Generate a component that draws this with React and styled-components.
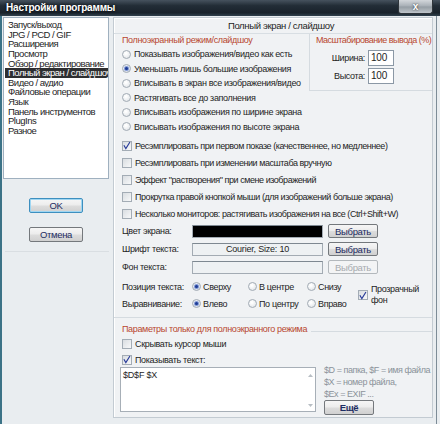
import React from 'react';
import styled, { createGlobalStyle, css } from 'styled-components';

const Global = createGlobalStyle`
  html, body { margin: 0; padding: 0; background: #e9edf0; }
  body { font-family: "Liberation Sans", Arial, sans-serif; font-size: 9px; color: #1e1e1e; letter-spacing: -0.35px; }
  * { box-sizing: border-box; }
`;

const Window = styled.div`
  width: 440px; height: 424px; display: flex; flex-direction: column; overflow: hidden;
  background: #e9edf0;
`;

const TitleBar = styled.div`
  height: 16px; flex: none; display: flex; align-items: flex-start;
  background: linear-gradient(#46525e 0%, #232d37 35%, #19222b 80%, #31414d 100%);
`;

const Title = styled.div`
  color: #fff; font-weight: bold; font-size: 10px; letter-spacing: -0.2px;
  padding: 2px 0 0 6px; line-height: 12px; text-shadow: 0 0 3px #000;
`;

const CloseBtn = styled.div`
  margin-left: auto; margin-right: 7px; width: 35px; height: 14px;
  border: 1px solid #2f353b; border-top: none; border-radius: 0 0 3px 3px;
  background: linear-gradient(#d3d7db, #a7aeb5 48%, #949ca3 52%, #bfc5ca);
  color: #fff; font-weight: bold; font-size: 10px; line-height: 12px; letter-spacing: 0;
  display: flex; align-items: center; justify-content: center; text-shadow: 0 0 2px #222;
`;

const Body = styled.div`
  flex: 1; min-height: 0; width: 437px; display: flex; gap: 4px;
  border-left: 2px solid #3c7387; border-right: 1px solid #7d8c97;
  padding: 1px 3px 6px 1px;
`;

const LeftColumn = styled.div`
  width: 106px; flex: none; display: flex; flex-direction: column; align-items: center;
`;

const ListBox = styled.div`
  width: 106px; height: 162px; background: #fff; border: 1px solid #9fb0bf;
  padding-top: 2px; overflow: hidden;
`;

const ListItem = styled.div`
  height: 9.65px; line-height: 10px; padding-left: 4px; white-space: nowrap; overflow: hidden;
  font-size: 9.5px; letter-spacing: -0.5px;
  ${p => p.$selected && css`background: #2e2f31; color: #fff; margin-left: 1px; padding-left: 3px;`}
`;

const Button = styled.div`
  width: ${p => p.$w || 50}px; height: ${p => p.$h || 14}px;
  display: flex; align-items: center; justify-content: center;
  border: 1px solid #74787c; border-radius: 2px;
  background: linear-gradient(#f6f6f6 0%, #ececec 48%, #dddddd 52%, #d0d0d0 100%);
  color: #1d2c62; font-size: 9.5px; flex: none;
  ${p => p.$default && css`border-color: #3d8fbf; box-shadow: inset 0 0 0 1px #9fd6f2;`}
  ${p => p.$disabled && css`border-color: #b3b8bc; background: #f3f4f5; color: #a7abaf;`}
  ${p => p.$bold && css`font-weight: bold;`}
`;

const OkButton = styled(Button)`
  margin-top: 19px;
`;
const CancelButton = styled(Button)`
  margin-top: 14px;
`;
const LeftSeparator = styled.div`
  align-self: stretch; margin: 9px 0 0 2px; border-top: 1px solid #d9dee2;
`;

const Panel = styled.div`
  width: 320px; flex: none; display: flex; flex-direction: column;
  background: #f0f2f4; border: 1px solid #c3cbd2;
  box-shadow: inset 1px 1px 0 #fff;
`;

const PanelHeader = styled.div`
  height: 16px; line-height: 15px; text-align: center; border-bottom: 1px solid #d8dee3;
  padding-left: 16px; font-size: 9.5px;
`;

const TopGroups = styled.div`
  height: 103px; display: flex; flex: none;
`;

const LeftGroup = styled.div`
  flex: 1; padding-left: 8px;
`;

const GroupTitle = styled.div`
  height: 13px; line-height: 13px; color: #b8472f; white-space: nowrap;
  letter-spacing: ${p => p.$tight ? '-0.5px' : 'inherit'};
`;

const RightGroup = styled.div`
  width: 123px; height: 57px; border-left: 1px solid #d5dbe0; border-bottom: 1px solid #d5dbe0;
  padding-left: 6px;
`;

const ScaleGrid = styled.div`
  margin: 3px 0 0 -6px; display: grid; grid-template-columns: 55px 26px;
  column-gap: 3px; row-gap: 2px; align-items: center;
`;

const FieldLabel = styled.div`
  text-align: right;
`;

const NumInput = styled.div`
  height: 16px; background: #fff; border: 1px solid #8b98a5; line-height: 14px; padding-left: 2px;
  letter-spacing: -0.2px; font-size: 10px;
`;

const OptRow = styled.div`
  height: ${p => p.$h || 14.5}px; display: flex; align-items: center; gap: 3px; white-space: nowrap;
`;

const CheckRow = styled(OptRow)`
  gap: 3px;
`;

const RadioCircle = styled.span`
  width: 9px; height: 9px; border-radius: 50%; flex: none; position: relative;
  border: 1px solid #a2abb4;
  background: radial-gradient(circle at 40% 35%, #ffffff 10%, #dfe3e7 90%);
  ${p => p.$checked && css`
    &::after {
      content: ''; position: absolute; left: 2px; top: 2px; width: 3px; height: 3px; border-radius: 50%;
      background: #1d3b93; box-shadow: 0 0 1px 1px #6f8ad0;
    }
  `}
`;

const CheckBox = styled.span`
  width: 10px; height: 10px; flex: none; display: inline-flex; align-items: center; justify-content: center;
  border: 1px solid #a3acb5;
  background: linear-gradient(135deg, #d9dde1, #f7f8f9);
`;

const Radio = ({ checked, children }) => (
  <>
    <RadioCircle $checked={checked} />
    <span>{children}</span>
  </>
);

const Check = ({ checked }) => (
  <CheckBox>
    {checked && (
      <svg width="9" height="9" viewBox="0 0 9 9">
        <path d="M1 4.2 L3.2 8 L7.8 0.5" fill="none" stroke="#2a3d9a" strokeWidth="1.3" />
      </svg>
    )}
  </CheckBox>
);

const Section = styled.div`
  padding-left: 8px;
`;

const ChecksBlock = styled(Section)`
  letter-spacing: -0.45px;
`;

const ColorRow = styled.div`
  height: 18px; display: flex; align-items: center; padding-left: 8px;
`;

const ColorLabel = styled.div`
  width: 70px; flex: none; white-space: nowrap;
`;

const ColorBox = styled.div`
  width: 131px; height: 13px; margin-right: 5px; flex: none;
  border: 1px solid #a3abb3; border-top-color: #7e8891;
  background: ${p => p.$black ? '#000' : '#eef1f3'};
  text-align: center; line-height: 11px; letter-spacing: -0.2px;
`;

const PosGrid = styled.div`
  margin-top: 2px; padding-left: 8px; display: grid;
  grid-template-columns: 70px 56px 59px 51px auto;
  grid-template-rows: 17px 17px; align-items: center; white-space: nowrap;
`;

const PosCell = styled.div`
  display: flex; align-items: center; gap: 2px; white-space: nowrap;
`;

const TransparentCell = styled.div`
  grid-column: 5; grid-row: 1 / span 2; display: flex; align-items: center; gap: 3px;
  line-height: 11px;
`;

const Divider = styled.div`
  margin-top: 5px; border-top: 1px solid #d5dbe0;
`;

const LowerTitleRow = styled.div`
  height: 15px; margin-top: 3px; display: flex; align-items: center; padding-left: 8px;
  color: #b8472f; white-space: nowrap;
  &::after { content: ''; flex: 1; margin-left: 4px; margin-top: 6px; border-top: 1px solid #d5dbe0; }
`;

const TextRow = styled.div`
  display: flex; padding-left: 6px; gap: 8px;
`;

const TextArea = styled.div`
  width: 196px; height: 45px; background: #fff; border: 1px solid #a7afb7; display: flex; flex: none;
`;

const TextContent = styled.div`
  flex: 1; padding: 2px 0 0 2px; letter-spacing: -0.2px;
`;

const ScrollTrack = styled.div`
  width: 10px; display: flex; flex-direction: column; justify-content: space-between; align-items: center;
  padding: 6px 0 4px;
`;

const HelpColumn = styled.div`
  display: flex; flex-direction: column; margin-top: -3px;
`;

const HelpText = styled.div`
  color: #8b929a; line-height: 12px; white-space: nowrap; letter-spacing: -0.45px;
`;

const MoreButton = styled(Button)`
  margin-top: 0;
`;

const menu = [
  'Запуск/выход', 'JPG / PCD / GIF', 'Расширения', 'Просмотр', 'Обзор / редактирование',
  'Полный экран / слайдшоу', 'Видео / аудио', 'Файловые операции', 'Язык',
  'Панель инструментов', 'PlugIns', 'Разное',
];

const radios = [
  ['Показывать изображения/видео как есть', false],
  ['Уменьшать лишь большие изображения', true],
  ['Вписывать в экран все изображения/видео', false],
  ['Растягивать все до заполнения', false],
  ['Вписывать изображения по ширине экрана', false],
  ['Вписывать изображения по высоте экрана', false],
];

const checks = [
  ['Ресэмплировать при первом показе (качественнее, но медленнее)', true],
  ['Ресэмплировать при изменении масштаба вручную', false],
  ['Эффект "растворения" при смене изображений', false],
  ['Прокрутка правой кнопкой мыши (для изображений больше экрана)', false],
  ['Несколько мониторов: растягивать изображения на все (Ctrl+Shift+W)', false],
];

const Arrow = ({ up }) => (
  <svg width="5" height="3" viewBox="0 0 5 3">
    <path d={up ? 'M0 3 L2.5 0 L5 3 Z' : 'M0 0 L2.5 3 L5 0 Z'} fill="#b8bec4" />
  </svg>
);

export default function App() {
  return (
    <Window>
      <Global />
      <TitleBar>
        <Title>Настройки программы</Title>
        <CloseBtn>x</CloseBtn>
      </TitleBar>
      <Body>
        <LeftColumn>
          <ListBox>
            {menu.map((m, i) => (
              <ListItem key={m} $selected={i === 5}>{m}</ListItem>
            ))}
          </ListBox>
          <OkButton $w={54} $h={15} $default>OK</OkButton>
          <CancelButton $w={54} $h={15}>Отмена</CancelButton>
          <LeftSeparator />
        </LeftColumn>
        <Panel>
          <PanelHeader>Полный экран / слайдшоу</PanelHeader>
          <TopGroups>
            <LeftGroup>
              <GroupTitle>Полноэкранный режим/слайдшоу</GroupTitle>
              {radios.map(([t, c]) => (
                <OptRow key={t}><Radio checked={c}>{t}</Radio></OptRow>
              ))}
            </LeftGroup>
            <RightGroup>
              <GroupTitle $tight>Масштабирование вывода (%)</GroupTitle>
              <ScaleGrid>
                <FieldLabel>Ширина:</FieldLabel>
                <NumInput>100</NumInput>
                <FieldLabel>Высота:</FieldLabel>
                <NumInput>100</NumInput>
              </ScaleGrid>
            </RightGroup>
          </TopGroups>
          <ChecksBlock>
            {checks.map(([t, c]) => (
              <CheckRow key={t} $h={17}><Check checked={c} /><span>{t}</span></CheckRow>
            ))}
          </ChecksBlock>
          <ColorRow>
            <ColorLabel>Цвет экрана:</ColorLabel>
            <ColorBox $black />
            <Button $w={50} $h={14}>Выбрать</Button>
          </ColorRow>
          <ColorRow>
            <ColorLabel>Шрифт текста:</ColorLabel>
            <ColorBox>Courier, Size: 10</ColorBox>
            <Button $w={50} $h={14}>Выбрать</Button>
          </ColorRow>
          <ColorRow>
            <ColorLabel>Фон текста:</ColorLabel>
            <ColorBox />
            <Button $w={50} $h={14} $disabled>Выбрать</Button>
          </ColorRow>
          <PosGrid>
            <div>Позиция текста:</div>
            <PosCell><Radio checked>Сверху</Radio></PosCell>
            <PosCell><Radio>В центре</Radio></PosCell>
            <PosCell><Radio>Снизу</Radio></PosCell>
            <TransparentCell>
              <Check checked />
              <span>Прозрачный<br />фон</span>
            </TransparentCell>
            <div>Выравнивание:</div>
            <PosCell><Radio checked>Влево</Radio></PosCell>
            <PosCell><Radio>По центру</Radio></PosCell>
            <PosCell><Radio>Вправо</Radio></PosCell>
          </PosGrid>
          <Divider />
          <LowerTitleRow>Параметры только для полноэкранного режима</LowerTitleRow>
          <Section>
            <CheckRow $h={16}><Check /><span>Скрывать курсор мыши</span></CheckRow>
            <CheckRow $h={15}><Check checked /><span>Показывать текст:</span></CheckRow>
          </Section>
          <TextRow>
            <TextArea>
              <TextContent>$D$F $X</TextContent>
              <ScrollTrack><Arrow up /><Arrow /></ScrollTrack>
            </TextArea>
            <HelpColumn>
              <HelpText>$D = папка, $F = имя файла</HelpText>
              <HelpText>$X = номер файла,</HelpText>
              <HelpText>$Ex = EXIF ...</HelpText>
              <MoreButton $w={50} $h={15} $bold>Ещё</MoreButton>
            </HelpColumn>
          </TextRow>
        </Panel>
      </Body>
    </Window>
  );
}
